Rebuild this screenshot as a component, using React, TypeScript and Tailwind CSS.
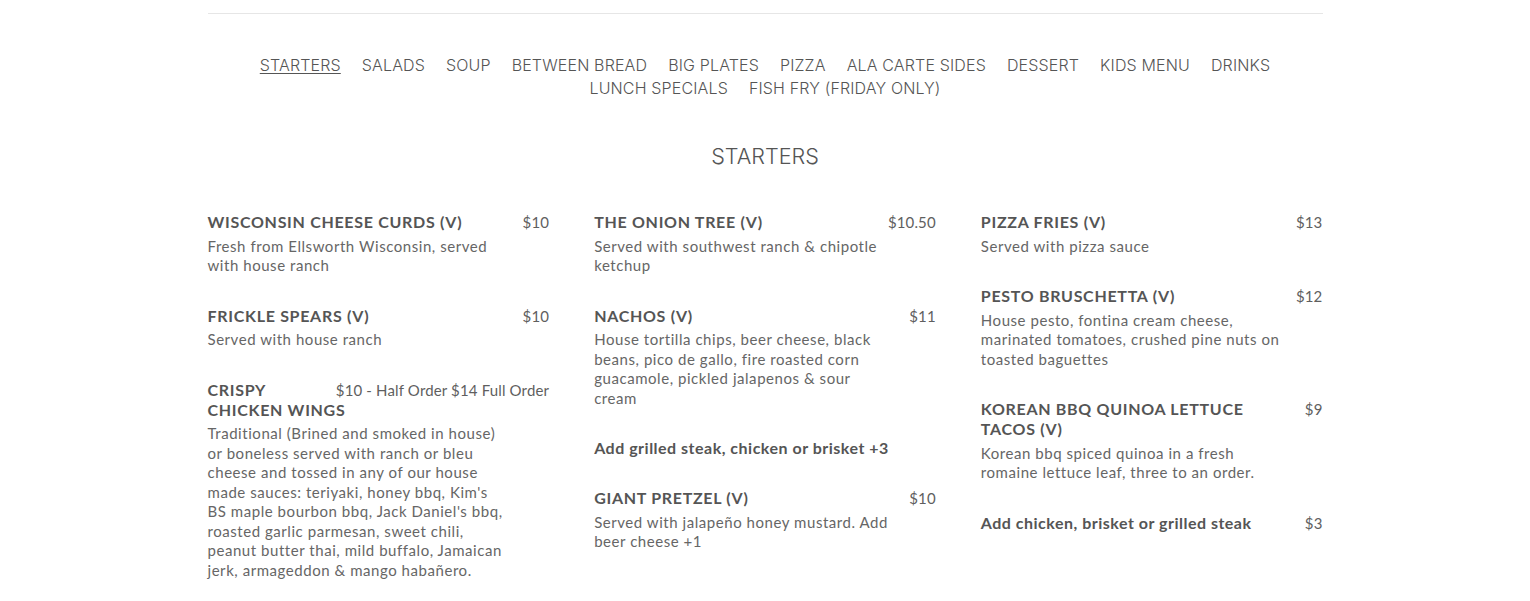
const NAV = [
  "STARTERS",
  "SALADS",
  "SOUP",
  "BETWEEN BREAD",
  "BIG PLATES",
  "PIZZA",
  "ALA CARTE SIDES",
  "DESSERT",
  "KIDS MENU",
  "DRINKS",
  "LUNCH SPECIALS",
  "FISH FRY (FRIDAY ONLY)",
];

type Item = { name: string; price?: string; desc?: string; plain?: boolean };

const COLUMNS: Item[][] = [
  [
    {
      name: "Wisconsin Cheese Curds (V)",
      price: "$10",
      desc: "Fresh from Ellsworth Wisconsin, served with house ranch",
    },
    { name: "Frickle Spears (V)", price: "$10", desc: "Served with house ranch" },
    {
      name: "Crispy Chicken Wings",
      price: "$10 - Half Order $14 Full Order",
      desc: "Traditional (Brined and smoked in house) or boneless served with ranch or bleu cheese and tossed in any of our house made sauces: teriyaki, honey bbq, Kim's BS maple bourbon bbq, Jack Daniel's bbq, roasted garlic parmesan, sweet chili, peanut butter thai, mild buffalo, Jamaican jerk, armageddon & mango habañero.",
    },
  ],
  [
    {
      name: "The Onion Tree (V)",
      price: "$10.50",
      desc: "Served with southwest ranch & chipotle ketchup",
    },
    {
      name: "Nachos (V)",
      price: "$11",
      desc: "House tortilla chips, beer cheese, black beans, pico de gallo, fire roasted corn guacamole, pickled jalapenos & sour cream",
    },
    { name: "Add grilled steak, chicken or brisket +3", plain: true },
    {
      name: "Giant Pretzel (V)",
      price: "$10",
      desc: "Served with jalapeño honey mustard. Add beer cheese +1",
    },
  ],
  [
    { name: "Pizza Fries (V)", price: "$13", desc: "Served with pizza sauce" },
    {
      name: "Pesto Bruschetta (V)",
      price: "$12",
      desc: "House pesto, fontina cream cheese, marinated tomatoes, crushed pine nuts on toasted baguettes",
    },
    {
      name: "Korean BBQ Quinoa Lettuce Tacos (V)",
      price: "$9",
      desc: "Korean bbq spiced quinoa in a fresh romaine lettuce leaf, three to an order.",
    },
    { name: "Add chicken, brisket or grilled steak", price: "$3", plain: true },
  ],
];

function MenuItem({ item }: { item: Item }) {
  return (
    <div className="mb-[30px] flow-root">
      {/* price floats right so a long price pushes only the first title line */}
      {item.price && (
        <span className="float-right whitespace-nowrap text-[15px] leading-[20px] tracking-[0.15px] text-[#5f5f5f]">
          {item.price}
        </span>
      )}
      <h3
        className={`text-[16px] leading-[20px] font-bold text-[#555] ${
          item.plain ? "tracking-[0.5px]" : "uppercase w-[80%] tracking-[0.7px]"
        }`}
      >
        {item.name}
      </h3>
      {item.desc && (
        <p className="clear-both mt-[4.5px] max-w-[302px] text-[15px] leading-[19.5px] tracking-[0.55px] text-[#666]">
          {item.desc}
        </p>
      )}
    </div>
  );
}

export default function App() {
  return (
    <div
      className="min-h-screen bg-white"
      style={{ fontFamily: "Lato, 'Noto Sans', sans-serif" }}
    >
      <div className="mx-auto w-[1115px] border-t border-[#e6e6e6] mt-[13px]">
        {/* Nav */}
        <nav
          className="mx-auto mt-[40px] flex max-w-[1060px] flex-wrap justify-center text-[16px] leading-[23px] tracking-[0.15px] text-[#555]"
          style={{ fontFamily: "Inter, sans-serif" }}
        >
          {NAV.map((n, i) => (
            <a
              key={n}
              href="#"
              className={`mx-[10.5px] font-light ${i === 0 ? "underline underline-offset-2" : ""}`}
            >
              {n}
            </a>
          ))}
        </nav>

        <h2
          className="mt-[43px] text-center text-[21.6px] leading-[26px] font-light text-[#555]"
          style={{ fontFamily: "Inter, sans-serif" }}
        >
          STARTERS
        </h2>

        {/* Items */}
        <div className="mt-[43px] grid grid-cols-3 gap-x-[45px]">
          {COLUMNS.map((col, i) => (
            <div key={i}>
              {col.map((item) => (
                <MenuItem key={item.name} item={item} />
              ))}
            </div>
          ))}
        </div>
      </div>
    </div>
  );
}
